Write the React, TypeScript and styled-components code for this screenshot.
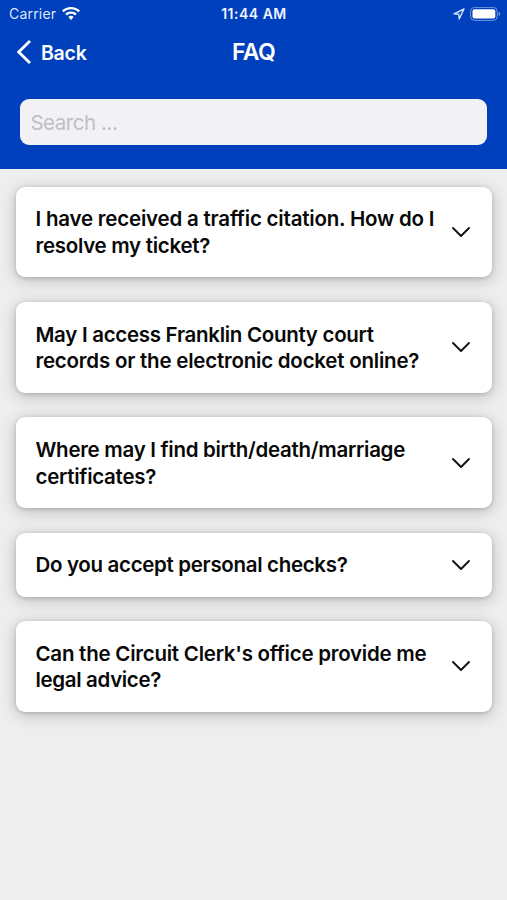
import React from "react";
import styled, { createGlobalStyle } from "styled-components";

const GlobalStyle = createGlobalStyle`
  * { box-sizing: border-box; }
  body { margin: 0; background: #eeeeee; font-family: Inter, "Liberation Sans", sans-serif; }
`;

const Screen = styled.main`
  width: 507px;
  height: 900px;
  overflow: hidden;
  background: #eeeeee;
`;

const Header = styled.header`
  height: 169.3px;
  background: #0040bd;
  color: #fff;
`;

const StatusBar = styled.div`
  height: 27px;
  display: grid;
  grid-template-columns: 1fr auto 1fr;
  align-items: center;
  padding: 1px 6px 0 9px;
  font-size: 14px;
  line-height: 18px;
`;

const StatusGroup = styled.div<{ $end?: boolean }>`
  display: flex;
  align-items: center;
  justify-content: ${(p) => (p.$end ? "flex-end" : "flex-start")};
  gap: ${(p) => (p.$end ? 5 : 6)}px;
`;

const Carrier = styled.span`
  letter-spacing: 0.2px;
  color: #dce6fa;
`;

const Clock = styled.time`
  font-weight: 600;
  letter-spacing: 0.5px;
  margin-right: 2px;
  color: #eef3fd;
`;

const NavBar = styled.nav`
  height: 50px;
  display: grid;
  grid-template-columns: 1fr auto 1fr;
  align-items: center;
  padding: 0 16px;
`;

const BackButton = styled.button`
  display: flex;
  align-items: center;
  gap: 9px;
  padding: 0;
  border: 0;
  background: none;
  color: inherit;
  font: 600 19.5px/26px Inter, sans-serif;
  letter-spacing: -0.25px;
`;

const BackLabel = styled.span`
  padding-top: 1px;
`;

const Title = styled.h1`
  margin: 0;
  font-size: 23px;
  line-height: 26px;
  font-weight: 600;
  letter-spacing: -0.6px;
`;

const SearchField = styled.input`
  display: block;
  width: 467px;
  height: 46px;
  margin: 22px 0 0 20.4px;
  padding: 1px 10px 0;
  border: 0;
  border-radius: 9px;
  outline: 0;
  background: #f1f1f6;
  color: #000;
  font: 400 20.5px/26px Inter, sans-serif;
  letter-spacing: -0.45px;
  &::placeholder { color: #bfbfc4; opacity: 1; }
`;

const QuestionList = styled.section`
  display: flex;
  flex-direction: column;
  gap: 24.6px;
  padding: 17.4px 15px 0 15.5px;
`;

const Card = styled.article`
  display: flex;
  align-items: center;
  justify-content: space-between;
  padding: 18.65px 21px 18.65px 20px;
  border-radius: 9px;
  background: #fff;
  box-shadow: 0 3px 16px rgba(0, 0, 0, 0.22), 0 1px 4px rgba(0, 0, 0, 0.16);
`;

const Question = styled.h2`
  margin: 0;
  padding-top: 1px;
  margin-bottom: -1px;
  font-size: 20.5px;
  line-height: 26.7px;
  font-weight: 600;
  color: #080808;
`;

const Line = styled.span<{ $tracking: number }>`
  display: block;
  white-space: nowrap;
  letter-spacing: ${(p) => p.$tracking}px;
`;

const WifiIcon = () => (
  <svg width="18" height="14" viewBox="0 0 18 14" fill="#fff">
    <path d="M9 0C5.6 0 2.4 1.3 0 3.6l1.6 1.7C3.6 3.4 6.200 2.300 9 2.300s5.400 1.100 7.400 3L18 3.600C15.600 1.300 12.400 0 9 0Z" />
    <path d="M9 4.400c-2.200 0-4.200.8-5.800 2.300l1.700 1.800C6 7.400 7.400 6.800 9 6.800s3 .6 4.100 1.700l1.700-1.800C13.200 5.200 11.200 4.400 9 4.400Z" />
    <path d="M9 8.700c-1 0-1.900.4-2.600 1.200L9 12.900l2.600-3C10.900 9.100 10 8.700 9 8.700Z" />
  </svg>
);

const LocationIcon = () => (
  <svg width="12" height="12" viewBox="0 0 12 12" fill="none" stroke="#d5e1f8" strokeWidth="1.4" strokeLinejoin="round">
    <path d="M11 1 1 5.800l4.800.4.400 4.800Z" />
  </svg>
);

const BatteryIcon = () => (
  <svg width="31" height="15" viewBox="0 0 31 15">
    <rect x=".6" y=".4" width="26.600" height="13" rx="4" fill="none" stroke="#7195dc" strokeWidth="1" />
    <rect x="2.500" y="2.200" width="22.800" height="9.400" rx="2" fill="#fff" />
    <path d="M28.600 4.700c2.200.7 2.200 3.700 0 4.400Z" fill="#7195dc" />
  </svg>
);

const BackIcon = () => (
  <svg width="16" height="26" viewBox="0 0 16 26" fill="none" stroke="#fff" strokeWidth="2.800">
    <path d="M14 2 2.700 13 14 24" />
  </svg>
);

const ChevronIcon = () => (
  <svg width="20" height="12" viewBox="0 0 20 12" fill="none" stroke="#111" strokeWidth="1.900" strokeLinecap="round" strokeLinejoin="round">
    <path d="m2 2 8 8 8-8" />
  </svg>
);

type TextLine = { text: string; tracking: number };

const questions: TextLine[][] = [
  [
    { text: "I have received a traffic citation. How do I", tracking: -0.2 },
    { text: "resolve my ticket?", tracking: -0.28 },
  ],
  [
    { text: "May I access Franklin County court", tracking: -0.29 },
    { text: "records or the electronic docket online?", tracking: -0.22 },
  ],
  [
    { text: "Where may I find birth/death/marriage", tracking: -0.29 },
    { text: "certificates?", tracking: -0.27 },
  ],
  [{ text: "Do you accept personal checks?", tracking: -0.32 }],
  [
    { text: "Can the Circuit Clerk's office provide me", tracking: -0.24 },
    { text: "legal advice?", tracking: -0.34 },
  ],
];

export default function App() {
  return (
    <Screen>
      <GlobalStyle />
      <Header>
        <StatusBar>
          <StatusGroup>
            <Carrier>Carrier</Carrier>
            <WifiIcon />
          </StatusGroup>
          <Clock>11:44 AM</Clock>
          <StatusGroup $end>
            <LocationIcon />
            <BatteryIcon />
          </StatusGroup>
        </StatusBar>
        <NavBar>
          <BackButton>
            <BackIcon />
            <BackLabel>Back</BackLabel>
          </BackButton>
          <Title>FAQ</Title>
        </NavBar>
        <SearchField placeholder="Search ..." aria-label="Search" />
      </Header>
      <QuestionList>
        {questions.map((lines) => (
          <Card key={lines[0].text}>
            <Question>
              {lines.map((line) => (
                <Line key={line.text} $tracking={line.tracking}>
                  {line.text}
                </Line>
              ))}
            </Question>
            <ChevronIcon />
          </Card>
        ))}
      </QuestionList>
    </Screen>
  );
}
